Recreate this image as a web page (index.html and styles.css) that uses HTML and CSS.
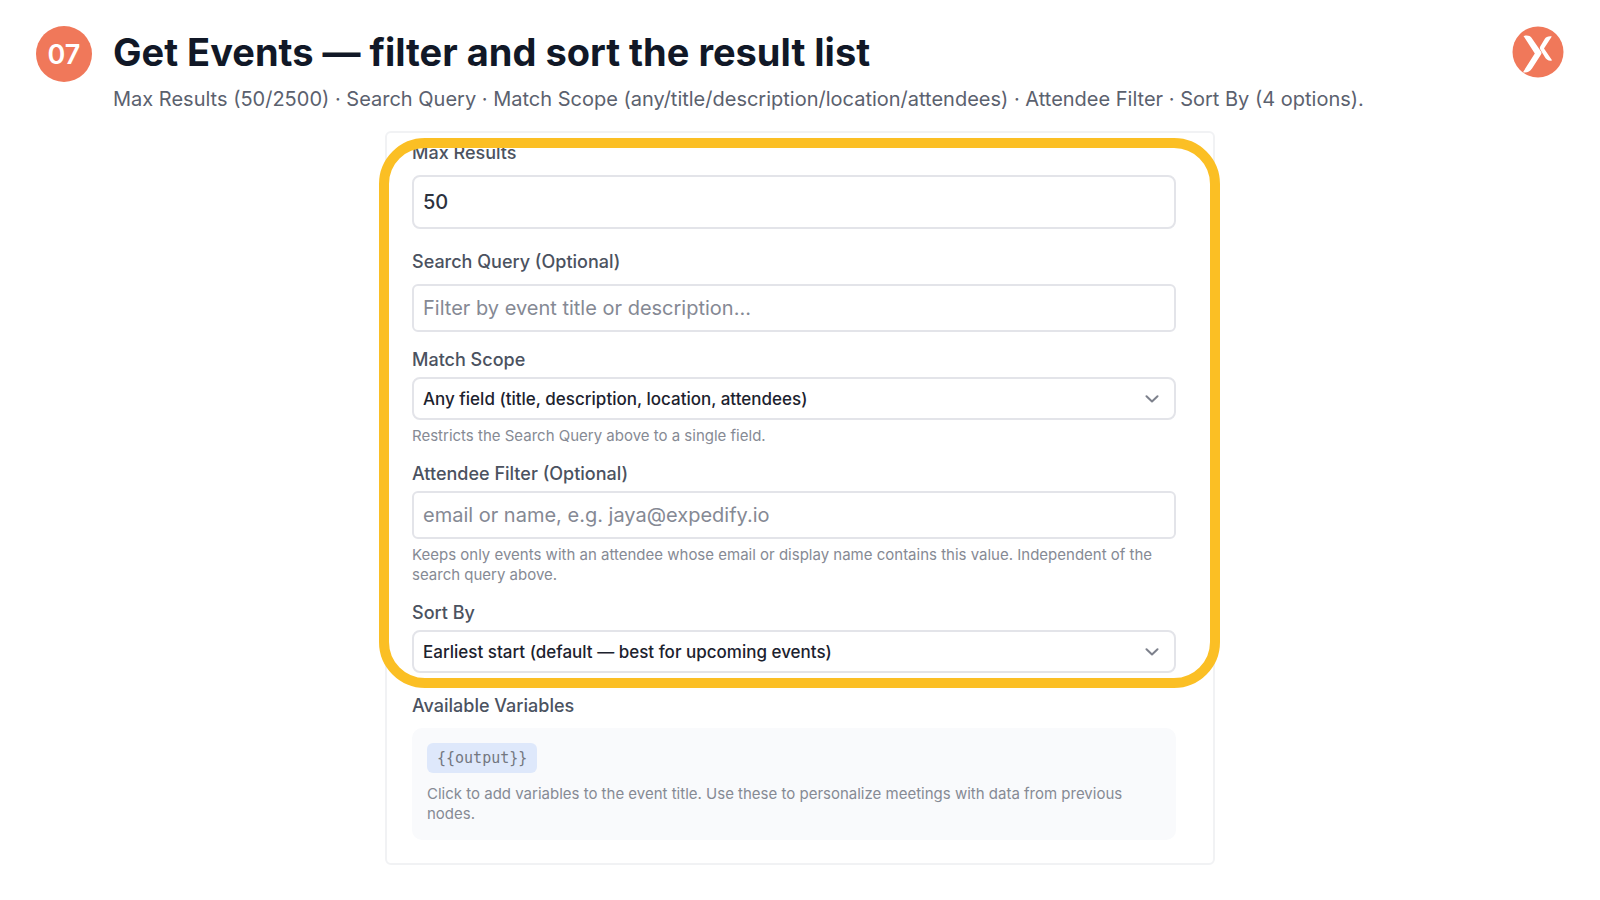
FILE: index.html
```html
<!DOCTYPE html>
<html lang="en">
<head>
<meta charset="utf-8">
<meta name="viewport" content="width=device-width, initial-scale=1">
<title>Get Events — filter and sort the result list</title>
<link rel="stylesheet" href="styles.css">
</head>
<body>
<header class="header">
  <span class="step">07</span>
  <div class="heading">
    <h1 class="title">Get Events — filter and sort the result list</h1>
    <p class="subtitle">Max Results (50/2500) · Search Query · Match Scope (any/title/description/location/attendees) · Attendee Filter · Sort By (4 options).</p>
  </div>
  <svg class="logo" viewBox="0 0 52 52" role="img" aria-label="Expedify">
    <circle cx="26" cy="26" r="25.5" fill="#f0785a"/>
    <path fill="#fff" d="M11.500 10C15 9 18 9.500 19.500 11.800L29 25.500Q30 27 29 28.600L20 42.500C17.800 45.800 14.500 47 11 46.200L22.800 27.500Z"/>
    <path fill="#fff" d="M39.800 10.500C36.500 10 34 11 32.700 13L28.200 20.500Q27.300 22 28.300 23.500L32.500 30.500C34 33.600 36.500 35.200 40.200 34.600L32 22.500Z"/>
  </svg>
</header>
<main class="panel">
  <form class="form">
    <div class="fields">
      <div class="field field-roomy">
        <label class="label" for="max">Max Results</label>
        <input class="control control-tall" id="max" type="number" value="50">
      </div>
      <div class="field field-roomy">
        <label class="label" for="query">Search Query (Optional)</label>
        <input class="control" id="query" type="text" placeholder="Filter by event title or description...">
      </div>
      <div class="field">
        <label class="label" for="scope">Match Scope</label>
        <div class="select-wrap">
          <select class="control control-select" id="scope"><option>Any field (title, description, location, attendees)</option></select>
          <svg class="chevron" viewBox="0 0 14 8" aria-hidden="true"><path d="M1.500 1.200L7 6.500L12.500 1.200"/></svg>
        </div>
        <p class="hint">Restricts the Search Query above to a single field.</p>
      </div>
      <div class="field">
        <label class="label" for="attendee">Attendee Filter (Optional)</label>
        <input class="control" id="attendee" type="text" placeholder="email or name, e.g. jaya@expedify.io">
        <p class="hint">Keeps only events with an attendee whose email or display name contains this value. Independent of the search query above.</p>
      </div>
      <div class="field">
        <label class="label" for="sort">Sort By</label>
        <div class="select-wrap">
          <select class="control control-select" id="sort"><option>Earliest start (default — best for upcoming events)</option></select>
          <svg class="chevron" viewBox="0 0 14 8" aria-hidden="true"><path d="M1.500 1.200L7 6.500L12.500 1.200"/></svg>
        </div>
      </div>
      <div class="highlight"></div>
    </div>
    <section class="field field-roomy">
      <h2 class="label">Available Variables</h2>
      <div class="variables">
        <button class="chip" type="button">{{output}}</button>
        <p class="hint">Click to add variables to the event title. Use these to personalize meetings with data from previous nodes.</p>
      </div>
    </section>
  </form>
</main>
</body>
</html>
```

FILE: styles.css
```css
* {
  box-sizing: border-box;
}

body {
  margin: 0;
  background: #fff;
  color: #111827;
  font-family: Inter, "Liberation Sans", sans-serif;
}

h1, h2, p {
  margin: 0;
}

.header {
  display: flex;
  align-items: flex-start;
  gap: 21px;
  padding: 26px 36px 18px;
}

.step {
  display: flex;
  flex: none;
  align-items: center;
  justify-content: center;
  width: 56px;
  height: 56px;
  border-radius: 50%;
  background: #f0785a;
  color: #fff;
  font-size: 27px;
  font-weight: 600;
}

.heading {
  flex: 1;
}

.title {
  font-size: 38px;
  font-weight: 700;
  line-height: 52px;
}

.subtitle {
  padding-top: 7px;
  color: #5b616e;
  font-size: 20px;
  line-height: 28px;
}

.logo {
  flex: none;
  width: 52px;
  height: 52px;
}

.panel {
  max-width: 830px;
  margin: 0 auto;
  padding: 8px 37px 23px 25px;
  border: 2px solid #f1f2f4;
  border-radius: 6px;
}

.form {
  display: flex;
  flex-direction: column;
  gap: 21px;
}

.fields {
  position: relative;
  display: flex;
  flex-direction: column;
  gap: 16px;
}

.field {
  display: flex;
  flex-direction: column;
  gap: 5px;
}

.field-roomy {
  gap: 10px;
}

.field-roomy:first-child {
  margin-bottom: 5px;
}

.label {
  color: #4b5260;
  font-size: 18px;
  font-weight: 500;
  line-height: 24px;
}

.control {
  width: 100%;
  height: 48px;
  margin: 0;
  padding: 0 9px;
  border: 2px solid #e3e4e9;
  border-radius: 6px;
  background: #fff;
  color: #2c323e;
  font-family: inherit;
  font-size: 20px;
  appearance: none;
}

.control::placeholder {
  color: #858994;
  opacity: 1;
}

.control-tall {
  height: 54px;
  border-radius: 8px;
  font-weight: 500;
  appearance: textfield;
}

.control-tall::-webkit-inner-spin-button {
  display: none;
}

.control-select {
  height: 43px;
  border-radius: 8px;
  color: #1c222e;
  font-size: 17px;
  font-weight: 500;
}

.select-wrap {
  position: relative;
}

.chevron {
  position: absolute;
  top: 18px;
  right: 17px;
  width: 14px;
  height: 8px;
  fill: none;
  stroke: #7d818c;
  stroke-width: 2;
  stroke-linecap: round;
  stroke-linejoin: round;
  pointer-events: none;
}

.hint {
  margin-top: 1px;
  color: #868a94;
  font-size: 15px;
  line-height: 20px;
}

.highlight {
  position: absolute;
  inset: -3px -44px -15px -33px;
  border: 10px solid #fbbf24;
  border-radius: 46px;
  pointer-events: none;
}

.variables {
  display: flex;
  flex-direction: column;
  align-items: flex-start;
  gap: 10px;
  padding: 15px 15px 16px;
  border-radius: 10px;
  background: #f9fafc;
}

.chip {
  height: 30px;
  padding: 0 10px;
  border: 0;
  border-radius: 6px;
  background: #dee8fb;
  color: #737780;
  font-family: "DejaVu Sans Mono", monospace;
  font-size: 15px;
}
```
